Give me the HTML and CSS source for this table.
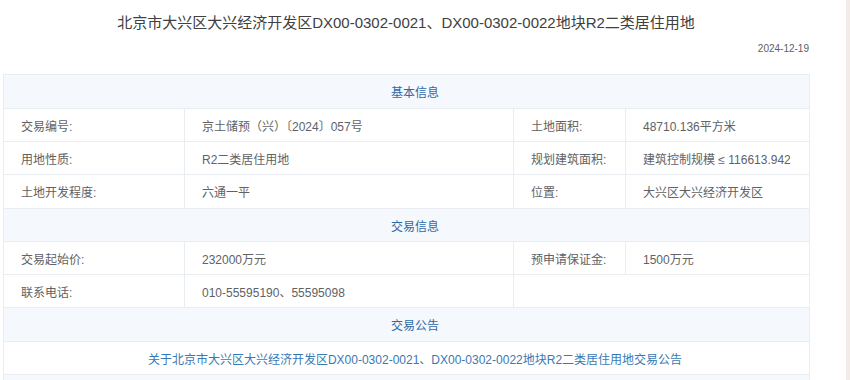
FILE: index.html
```html
<!DOCTYPE html>
<html lang="zh-CN">
<head>
<meta charset="utf-8">
<title>地块详情</title>
<link rel="stylesheet" href="styles.css">
</head>
<body>
<div class="page">
  <h1 class="title">北京市大兴区大兴经济开发区DX00-0302-0021、DX00-0302-0022地块R2二类居住用地</h1>
  <div class="date">2024-12-19</div>
  <table class="info">
    <colgroup>
      <col class="c1"><col class="c2"><col class="c3"><col class="c4">
    </colgroup>
    <tbody>
      <tr class="tall"><td class="sec" colspan="4">基本信息</td></tr>
      <tr><td>交易编号:</td><td>京土储预（兴）〔2024〕057号</td><td>土地面积:</td><td>48710.136平方米</td></tr>
      <tr><td>用地性质:</td><td>R2二类居住用地</td><td>规划建筑面积:</td><td>建筑控制规模 ≤ 116613.942</td></tr>
      <tr class="tall"><td>土地开发程度:</td><td>六通一平</td><td>位置:</td><td>大兴区大兴经济开发区</td></tr>
      <tr><td class="sec" colspan="4">交易信息</td></tr>
      <tr><td>交易起始价:</td><td>232000万元</td><td>预申请保证金:</td><td>1500万元</td></tr>
      <tr><td>联系电话:</td><td>010-55595190、55595098</td><td colspan="2"></td></tr>
      <tr class="tall"><td class="sec" colspan="4">交易公告</td></tr>
      <tr><td class="link-cell" colspan="4"><a class="link" href="#">关于北京市大兴区大兴经济开发区DX00-0302-0021、DX00-0302-0022地块R2二类居住用地交易公告</a></td></tr>
      <tr><td class="sec" colspan="4"></td></tr>
    </tbody>
  </table>
</div>
</body>
</html>
```
FILE: styles.css
```css
html {
  background: linear-gradient(to right, #ffffff 846px, #f3ebe8 846px);
}
body {
  margin: 0;
  font-family: "Liberation Sans", "Noto Sans CJK SC", sans-serif;
  color: #606266;
  overflow: hidden;
  height: 380px;
}
.page {
  width: 806px;
  margin-left: 3px;
}
.title {
  margin: 0;
  padding-top: 13px;
  height: 20px;
  line-height: 20px;
  font-size: 15px;
  font-weight: normal;
  color: #404040;
  text-align: center;
}
.date {
  margin-top: 7px;
  height: 34px;
  line-height: 18px;
  font-size: 10px;
  color: #606060;
  text-align: right;
}
.info {
  width: 806px;
  border-collapse: collapse;
  table-layout: fixed;
  font-size: 12px;
}
.c1 { width: 181px; }
.c2 { width: 329px; }
.c3 { width: 112px; }
.c4 { width: 184px; }
.info td {
  height: 32px;
  padding: 0 0 0 17px;
  border: 1px solid #e9edf2;
  white-space: nowrap;
  overflow: hidden;
  color: #606266;
}
.info .tall td {
  height: 33px;
}
.info td.sec {
  background: #f5f8fc;
  color: #2e6aa8;
  text-align: center;
}
.info td.link-cell {
  text-align: center;
}
.link {
  color: #3a78b4;
  text-decoration: none;
}
```
